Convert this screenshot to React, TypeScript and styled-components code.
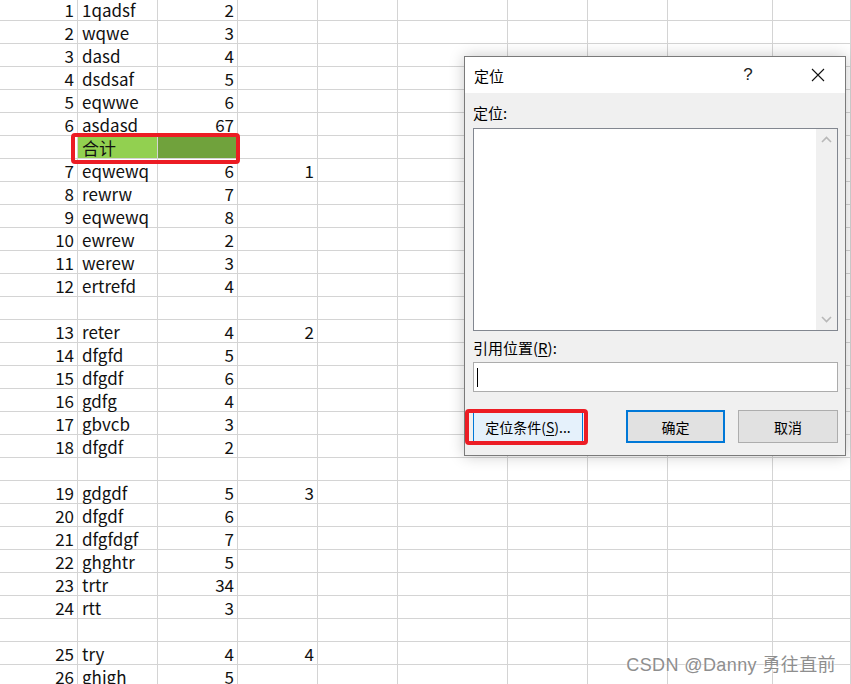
import React from "react";
import styled, { createGlobalStyle } from "styled-components";

const GlobalStyle = createGlobalStyle`
  html, body {
    margin: 0;
    padding: 0;
    background: #ffffff;
    overflow: hidden;
  }
`;

const Page = styled.div`
  position: relative;
  width: 851px;
  height: 684px;
  overflow: hidden;
  background: #ffffff;
  font-family: "Noto Sans CJK SC", "Noto Sans", sans-serif;
`;

const Sheet = styled.div`
  display: flex;
  flex-direction: column;
  margin-top: -2px;
`;

const Row = styled.div`
  display: grid;
  grid-template-columns: 78px 80px 80px 80px 80px 110px 80px 80px 105px 1fr;
  height: 23px;
`;

const Cell = styled.div<{ $align?: "left" | "right"; $fill?: string }>`
  box-sizing: border-box;
  height: 23px;
  border-right: 1px solid #d4d4d4;
  border-bottom: 1px solid #d4d4d4;
  background: ${(p) => p.$fill || "transparent"};
  text-align: ${(p) => p.$align || "left"};
  padding: 1px 3px 0 4px;
  font-size: 17px;
  line-height: 21px;
  color: #111;
  white-space: nowrap;
`;

const Highlight = styled.div<{ $left: number; $top: number; $w: number; $h: number }>`
  position: absolute;
  left: ${(p) => p.$left}px;
  top: ${(p) => p.$top}px;
  width: ${(p) => p.$w}px;
  height: ${(p) => p.$h}px;
  box-sizing: border-box;
  border: 4px solid #ec1c24;
  border-radius: 4px;
  pointer-events: none;
`;

const Dialog = styled.div`
  position: absolute;
  left: 464px;
  top: 56px;
  width: 382px;
  height: 400px;
  box-sizing: border-box;
  border: 1px solid #7a7a7a;
  background: #f0f0f0;
  box-shadow: 0 0 14px rgba(0, 0, 0, 0.22);
  display: flex;
  flex-direction: column;
`;

const TitleBar = styled.div`
  height: 36px;
  background: #ffffff;
  display: flex;
  align-items: center;
  padding-left: 9px;
  font-size: 15px;
  color: #000;
`;

const TitleText = styled.span`
  flex: 1;
`;

const HelpMark = styled.span`
  width: 22px;
  margin-right: 36px;
  font-family: "Liberation Sans", sans-serif;
  font-size: 17px;
  color: #222;
  text-align: center;
`;

const CloseBox = styled.span`
  width: 46px;
  height: 36px;
  display: flex;
  align-items: center;
  justify-content: center;
  margin-right: 4px;
`;

const Body = styled.div`
  flex: 1;
  display: flex;
  flex-direction: column;
  padding: 10px 7px 0 8px;
`;

const Label = styled.div<{ $gap: number }>`
  font-size: 15px;
  line-height: 20px;
  color: #000;
  margin-bottom: ${(p) => p.$gap}px;
`;

const ListBox = styled.div`
  height: 203px;
  box-sizing: border-box;
  border: 1px solid #828790;
  background: #ffffff;
  display: flex;
  justify-content: flex-end;
  margin-bottom: 7px;
`;

const ScrollTrack = styled.div`
  width: 21px;
  background: #f0f0f0;
  display: flex;
  flex-direction: column;
  justify-content: space-between;
  align-items: center;
  padding: 7px 0;
`;

const Input = styled.div`
  height: 30px;
  box-sizing: border-box;
  border: 1px solid #acacac;
  background: #ffffff;
  display: flex;
  align-items: center;
  padding-left: 3px;
`;

const Caret = styled.span`
  width: 1px;
  height: 19px;
  background: #000;
`;

const ButtonRow = styled.div`
  display: flex;
  align-items: center;
  margin-top: 18px;
`;

const ButtonGroup = styled.div`
  display: flex;
  gap: 13px;
  margin-left: auto;
`;

const Button = styled.button<{ $variant?: "default" | "hover" | "plain"; $w: number }>`
  width: ${(p) => p.$w}px;
  height: 33px;
  box-sizing: border-box;
  font-family: "Noto Sans CJK SC", sans-serif;
  font-size: 14px;
  color: #000;
  padding: 0;
  border-radius: 0;
  background: ${(p) => (p.$variant === "hover" ? "#e5f1fb" : "#e1e1e1")};
  border: ${(p) =>
    p.$variant === "default"
      ? "2px solid #0078d7"
      : p.$variant === "hover"
      ? "1px solid #0078d7"
      : "1px solid #adadad"};
`;

const Underline = styled.span`
  text-decoration: underline;
  text-underline-offset: 2px;
`;

const Watermark = styled.div`
  position: absolute;
  right: 15px;
  bottom: 8px;
  font-family: "Liberation Sans", "Noto Sans CJK SC", sans-serif;
  font-size: 18px;
  letter-spacing: 0.4px;
  color: #8e8e8e;
  text-shadow: 0 0 2px #ffffff, 0 0 2px #ffffff;
`;

type Line = [string, string, string, string?] | "total" | "blank";

const rows: Line[] = [
  ["1", "1qadsf", "2"],
  ["2", "wqwe", "3"],
  ["3", "dasd", "4"],
  ["4", "dsdsaf", "5"],
  ["5", "eqwwe", "6"],
  ["6", "asdasd", "67"],
  "total",
  ["7", "eqwewq", "6", "1"],
  ["8", "rewrw", "7"],
  ["9", "eqwewq", "8"],
  ["10", "ewrew", "2"],
  ["11", "werew", "3"],
  ["12", "ertrefd", "4"],
  "blank",
  ["13", "reter", "4", "2"],
  ["14", "dfgfd", "5"],
  ["15", "dfgdf", "6"],
  ["16", "gdfg", "4"],
  ["17", "gbvcb", "3"],
  ["18", "dfgdf", "2"],
  "blank",
  ["19", "gdgdf", "5", "3"],
  ["20", "dfgdf", "6"],
  ["21", "dfgfdgf", "7"],
  ["22", "ghghtr", "5"],
  ["23", "trtr", "34"],
  ["24", "rtt", "3"],
  "blank",
  ["25", "try", "4", "4"],
  ["26", "ghjgh", "5"],
];

const emptyTail = (n: number) =>
  Array.from({ length: n }, (_, i) => <Cell key={"e" + i} />);

function Chevron({ up }: { up?: boolean }) {
  return (
    <svg width="11" height="7" viewBox="0 0 11 7">
      <polyline
        points={up ? "1,6 5.5,1.5 10,6" : "1,1 5.5,5.5 10,1"}
        fill="none"
        stroke="#b8b8b8"
        strokeWidth="1.6"
      />
    </svg>
  );
}

export default function App() {
  return (
    <Page>
      <GlobalStyle />
      <Sheet>
        {rows.map((r, i) => {
          if (r === "blank") {
            return <Row key={i}>{emptyTail(10)}</Row>;
          }
          if (r === "total") {
            return (
              <Row key={i}>
                <Cell />
                <Cell $fill="#92d050">合计</Cell>
                <Cell $fill="#70a23c" />
                {emptyTail(7)}
              </Row>
            );
          }
          return (
            <Row key={i}>
              <Cell $align="right">{r[0]}</Cell>
              <Cell>{r[1]}</Cell>
              <Cell $align="right">{r[2]}</Cell>
              <Cell $align="right">{r[3] || ""}</Cell>
              {emptyTail(6)}
            </Row>
          );
        })}
      </Sheet>

      <Highlight $left={71} $top={133} $w={169} $h={31} />

      <Dialog>
        <TitleBar>
          <TitleText>定位</TitleText>
          <HelpMark>?</HelpMark>
          <CloseBox>
            <svg width="14" height="14" viewBox="0 0 14 14">
              <path d="M1 1 L13 13 M13 1 L1 13" stroke="#111" strokeWidth="1.1" />
            </svg>
          </CloseBox>
        </TitleBar>
        <Body>
          <Label $gap={5}>定位:</Label>
          <ListBox>
            <ScrollTrack>
              <Chevron up />
              <Chevron />
            </ScrollTrack>
          </ListBox>
          <Label $gap={4}>
            引用位置(<Underline>R</Underline>):
          </Label>
          <Input>
            <Caret />
          </Input>
          <ButtonRow>
            <Button $variant="hover" $w={110}>
              定位条件(<Underline>S</Underline>)...
            </Button>
            <ButtonGroup>
              <Button $variant="default" $w={99}>
                确定
              </Button>
              <Button $variant="plain" $w={100}>
                取消
              </Button>
            </ButtonGroup>
          </ButtonRow>
        </Body>
      </Dialog>

      <Highlight $left={465} $top={409} $w={123} $h={36} />

      <Watermark>CSDN @Danny 勇往直前</Watermark>
    </Page>
  );
}
